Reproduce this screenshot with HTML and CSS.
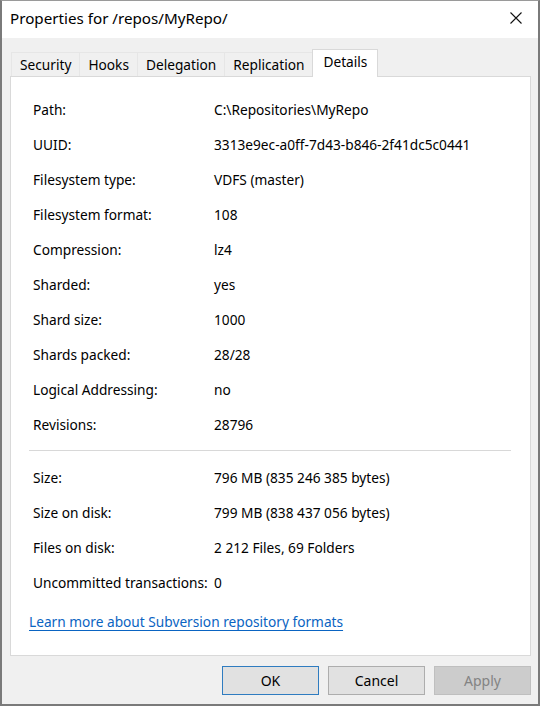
FILE: index.html
```html
<!DOCTYPE html>
<html>
<head>
<meta charset="utf-8">
<link rel="stylesheet" href="styles.css">
</head>
<body>
<div class="window">
  <div class="titlebar">
    <span class="title">Properties for /repos/MyRepo/</span>
    <svg class="close" width="12" height="12" viewBox="0 0 12 12"><path d="M0.5 0.5 L11.5 11.5 M11.5 0.5 L0.5 11.5" stroke="#111" stroke-width="1.1" fill="none"/></svg>
  </div>
  <div class="client">
    <div class="tabs">
      <div class="tab">Security</div>
      <div class="tab">Hooks</div>
      <div class="tab">Delegation</div>
      <div class="tab">Replication</div>
      <div class="tab active">Details</div>
    </div>
    <div class="panel">
      <div class="rows">
        <div class="row"><span>Path:</span><span>C:\Repositories\MyRepo</span></div>
        <div class="row"><span>UUID:</span><span>3313e9ec-a0ff-7d43-b846-2f41dc5c0441</span></div>
        <div class="row"><span>Filesystem type:</span><span>VDFS (master)</span></div>
        <div class="row"><span>Filesystem format:</span><span>108</span></div>
        <div class="row"><span>Compression:</span><span>lz4</span></div>
        <div class="row"><span>Sharded:</span><span>yes</span></div>
        <div class="row"><span>Shard size:</span><span>1000</span></div>
        <div class="row"><span>Shards packed:</span><span>28/28</span></div>
        <div class="row"><span>Logical Addressing:</span><span>no</span></div>
        <div class="row"><span>Revisions:</span><span>28796</span></div>
      </div>
      <div class="sep"></div>
      <div class="rows">
        <div class="row"><span>Size:</span><span>796 MB (835 246 385 bytes)</span></div>
        <div class="row"><span>Size on disk:</span><span>799 MB (838 437 056 bytes)</span></div>
        <div class="row"><span>Files on disk:</span><span>2 212 Files, 69 Folders</span></div>
        <div class="row"><span>Uncommitted transactions:</span><span>0</span></div>
      </div>
      <a class="link" href="#">Learn more about Subversion repository formats</a>
    </div>
    <div class="buttons">
      <button class="btn default">OK</button>
      <button class="btn">Cancel</button>
      <button class="btn disabled">Apply</button>
    </div>
  </div>
</div>
</body>
</html>
```
FILE: styles.css
```css
html, body {
  margin: 0;
  padding: 0;
}
body {
  font-family: "Noto Sans", "Open Sans", sans-serif;
  font-size: 13.7px;
  color: #000;
}
.window {
  width: 540px;
  height: 706px;
  box-sizing: border-box;
  border: 2px solid #7a7a7a;
  border-top: 1px solid #9a9a9a;
  background: #f0f0f0;
  display: flex;
  flex-direction: column;
}
.titlebar {
  height: 37px;
  background: #fff;
  display: flex;
  align-items: center;
  justify-content: space-between;
  padding: 0 16px 0 8px;
}
.title {
  font-size: 15.2px;
  padding-bottom: 4px;
}
.close {
  margin-bottom: 4px;
}
.client {
  flex: 1;
  padding: 10px 7px 0 8px;
  display: flex;
  flex-direction: column;
}
.tabs {
  display: flex;
  align-items: flex-end;
  height: 28px;
  padding-left: 1px;
  position: relative;
  z-index: 1;
}
.tab {
  height: 23px;
  padding: 0 8px;
  display: flex;
  align-items: center;
  border: 1px solid #e6e6e6;
  border-bottom: none;
  margin-right: -1px;
  background: #f0f0f0;
  line-height: 1;
}
.tab.active {
  height: 28px;
  background: #fff;
  border-color: #d9d9d9;
  padding: 0 10px;
  margin-bottom: -1px;
  align-items: flex-start;
  padding-top: 5px;
  box-sizing: border-box;
}
.panel {
  background: #fff;
  border: 1px solid #d9d9d9;
  height: 580px;
  box-sizing: border-box;
  padding: 15px 19px 0 18px;
  display: flex;
  flex-direction: column;
}
.rows {
  display: flex;
  flex-direction: column;
}
.row {
  height: 35px;
  display: grid;
  grid-template-columns: 181px 1fr;
  align-items: center;
  padding-left: 4px;
}
.sep {
  height: 1px;
  background: #d8d8d8;
  margin: 8px 0 9px;
}
.link {
  margin-top: 12px;
  color: #0a64c2;
  text-decoration: underline;
  text-underline-offset: 3px;
  line-height: 20px;
  align-self: flex-start;
}
.buttons {
  display: flex;
  justify-content: flex-end;
  gap: 9px;
  padding-top: 10px;
  padding-right: 0;
}
.btn {
  width: 97px;
  height: 29px;
  font-family: inherit;
  font-size: 14px;
  background: #e1e1e1;
  border: 1px solid #adadad;
  color: #000;
  padding: 0;
}
.btn.default {
  border: 1px solid #2f7cc0;
}
.btn.disabled {
  background: #cccccc;
  border-color: #bfbfbf;
  color: #838383;
}
```
